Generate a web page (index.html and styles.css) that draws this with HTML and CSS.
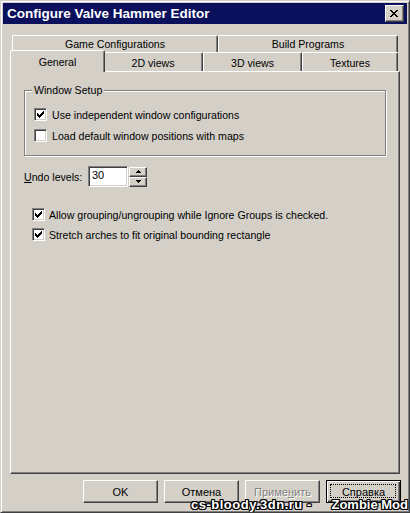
FILE: index.html
```html
<!DOCTYPE html>
<html>
<head>
<meta charset="utf-8">
<link rel="stylesheet" href="styles.css">
</head>
<body>
<div class="window">
  <div class="titlebar">
    <span class="title">Configure Valve Hammer Editor</span>
    <div class="close">
      <svg width="8" height="7" viewBox="0 0 8 7"><path d="M0 0h2v1h1v1h2V1h1V0h2v1H7v1H6v1H5v1h1v1h1v1h1v1H6V6H5V5H3v1H2v1H0V6h1V5h1V4h1V3H2V2H1V1H0z" fill="#000"/></svg>
    </div>
  </div>
  <div class="client">
    <div class="tabs">
      <div class="tabrow back">
        <div class="tab w-game">Game Configurations</div>
        <div class="tab w-build">Build Programs</div>
      </div>
      <div class="tabrow front">
        <div class="tab sel w-general">General</div>
        <div class="tab w-2d">2D views</div>
        <div class="tab w-3d">3D views</div>
        <div class="tab w-tex">Textures</div>
      </div>
    </div>
    <div class="panel">
      <div class="group">
        <div class="group-label">Window Setup</div>
        <label class="check">
          <span class="box"><svg width="7" height="7" viewBox="0 0 7 7"><path d="M6 0h1v3H6v1H5v1H4v1H3v1H2V6H1V5H0V2h1v1h1v1h1V3h1V2h1V1h1z" fill="#000"/></svg></span>
          <span>Use independent window configurations</span>
        </label>
        <label class="check">
          <span class="box"></span>
          <span>Load default window positions with maps</span>
        </label>
      </div>
      <div class="undo">
        <span class="undo-label"><u>U</u>ndo levels:</span>
        <div class="edit">30</div>
        <div class="spin">
          <div class="spin-btn"><svg width="5" height="3" viewBox="0 0 5 3"><path d="M2 0h1v1h1v1h1v1H0V2h1V1h1z" fill="#000"/></svg></div>
          <div class="spin-btn"><svg width="5" height="3" viewBox="0 0 5 3"><path d="M0 0h5v1H4v1H3v1H2V2H1V1H0z" fill="#000"/></svg></div>
        </div>
      </div>
      <div class="options">
        <label class="check small-gap">
          <span class="box"><svg width="7" height="7" viewBox="0 0 7 7"><path d="M6 0h1v3H6v1H5v1H4v1H3v1H2V6H1V5H0V2h1v1h1v1h1V3h1V2h1V1h1z" fill="#000"/></svg></span>
          <span>Allow grouping/ungrouping while Ignore Groups is checked.</span>
        </label>
        <label class="check small-gap">
          <span class="box"><svg width="7" height="7" viewBox="0 0 7 7"><path d="M6 0h1v3H6v1H5v1H4v1H3v1H2V6H1V5H0V2h1v1h1v1h1V3h1V2h1V1h1z" fill="#000"/></svg></span>
          <span>Stretch arches to fit original bounding rectangle</span>
        </label>
      </div>
    </div>
    <div class="buttons">
      <div class="btn">OK</div>
      <div class="btn">Отмена</div>
      <div class="btn disabled">Приме<u>н</u>ить</div>
      <div class="btn default">Справка</div>
    </div>
  </div>
  <div class="watermark"><span class="wm-site">cs-bloody.3dn.ru -</span><span>Zombie Mod</span></div>
</div>
</body>
</html>
```
FILE: styles.css
```css
html, body {
  margin: 0;
  padding: 0;
  background: #d4d0c8;
}
body {
  font-family: "Liberation Sans", Arial, sans-serif;
  font-size: 10.6px;
  color: #000;
}
.window {
  position: relative;
  width: 410px;
  height: 513px;
  box-sizing: border-box;
  background: #d4d0c8;
  border: 1px solid;
  border-color: #d4d0c8 #404040 #404040 #d4d0c8;
  box-shadow: inset 1px 1px 0 #fff, inset -1px -1px 0 #808080;
  padding: 2px;
  display: flex;
  flex-direction: column;
  overflow: hidden;
}
.titlebar {
  height: 21px;
  flex: none;
  background: #0a105c;
  display: flex;
  align-items: center;
  justify-content: space-between;
  padding: 0 3px 0 4px;
}
.title {
  color: #fff;
  font-weight: bold;
  font-size: 13.5px;
}
.close {
  width: 19px;
  height: 17px;
  box-sizing: border-box;
  background: #d4d0c8;
  border: 1px solid;
  border-color: #fff #404040 #404040 #fff;
  box-shadow: inset -1px -1px 0 #808080;
  display: flex;
  align-items: center;
  justify-content: center;
  padding: 0 1px 1px 0;
}
.close svg { display: block; }
.client {
  flex: 1;
  padding: 11px 7px 0 7px;
  display: flex;
  flex-direction: column;
}
.tabs {
  display: flex;
  flex-direction: column;
}
.tabrow {
  display: flex;
  margin-left: 2px;
  width: 386px;
}
.tabrow.back { height: 17px; }
.tabrow.front { height: 19px; }
.tab {
  box-sizing: border-box;
  height: 100%;
  background: #d4d0c8;
  border-top: 1px solid #fff;
  border-left: 1px solid #fff;
  border-right: 1px solid #404040;
  box-shadow: inset -1px 0 0 #808080;
  border-radius: 2px 2px 0 0;
  display: flex;
  align-items: center;
  justify-content: center;
  flex: none;
}
.tabrow.front .tab { padding-top: 2px; }
.tab.sel {
  position: relative;
  z-index: 1;
  margin: -2px -2px 0 -2px;
  height: 22px;
  padding-top: 0;
  padding-bottom: 1px;
}
.w-game { width: 206px; }
.w-build { width: 180px; }
.w-general { width: 95px; }
.w-2d { width: 100px; }
.w-3d { width: 99px; }
.w-tex { width: 96px; }
.panel {
  height: 403px;
  box-sizing: border-box;
  border: 1px solid;
  border-color: #fff #404040 #404040 #fff;
  box-shadow: inset -1px -1px 0 #808080;
  padding: 18px 0 0 13px;
  display: flex;
  flex-direction: column;
}
.group {
  position: relative;
  width: 362px;
  height: 66px;
  box-sizing: border-box;
  border: 1px solid #808080;
  box-shadow: inset 1px 1px 0 #fff, 1px 1px 0 #fff;
  padding: 17px 0 0 9px;
  display: flex;
  flex-direction: column;
  gap: 8px;
}
.group-label {
  position: absolute;
  left: 7px;
  top: -7px;
  padding: 0 2px;
  background: #d4d0c8;
  line-height: 13px;
}
.check {
  display: flex;
  align-items: center;
  gap: 5px;
  height: 13px;
  white-space: nowrap;
}
.check.small-gap { gap: 4px; }
.box {
  width: 13px;
  height: 13px;
  box-sizing: border-box;
  flex: none;
  background: #fff;
  border: 1px solid;
  border-color: #808080 #fff #fff #808080;
  box-shadow: inset 1px 1px 0 #404040, inset -1px -1px 0 #d4d0c8;
  display: flex;
  align-items: center;
  justify-content: center;
}
.box svg { display: block; }
.undo {
  display: flex;
  align-items: center;
  margin-top: 10px;
  height: 21px;
}
.undo-label { width: 64px; flex: none; }
.edit {
  width: 40px;
  height: 21px;
  box-sizing: border-box;
  background: #fff;
  border: 1px solid;
  border-color: #808080 #fff #fff #808080;
  box-shadow: inset 1px 1px 0 #404040, inset -1px -1px 0 #d4d0c8;
  padding: 2px 0 0 3px;
  font-size: 11px;
}
.spin {
  margin-left: 1px;
  width: 18px;
  height: 20px;
  display: flex;
  flex-direction: column;
}
.spin-btn {
  flex: 1;
  box-sizing: border-box;
  border: 1px solid;
  border-color: #fff #404040 #404040 #fff;
  box-shadow: inset -1px -1px 0 #808080;
  display: flex;
  align-items: center;
  justify-content: center;
}
.spin-btn svg { display: block; }
.options {
  margin-top: 21px;
  margin-left: 8px;
  display: flex;
  flex-direction: column;
  gap: 7px;
}
.buttons {
  display: flex;
  justify-content: flex-end;
  gap: 6px;
  margin-top: 6px;
  margin-right: -1px;
}
.btn {
  position: relative;
  width: 75px;
  height: 23px;
  box-sizing: border-box;
  border: 1px solid;
  border-color: #fff #404040 #404040 #fff;
  box-shadow: inset -1px -1px 0 #808080;
  display: flex;
  align-items: center;
  justify-content: center;
  font-size: 11px;
}
.btn.disabled {
  color: #808080;
  text-shadow: 1px 1px 0 #fff;
}
.btn.default {
  border-color: #000;
  box-shadow: inset 1px 1px 0 #fff, inset -1px -1px 0 #404040, inset -2px -2px 0 #808080;
}
.btn.default::after {
  content: "";
  position: absolute;
  left: 3px;
  top: 3px;
  right: 4px;
  bottom: 4px;
  border: 1px dotted #000;
}
.watermark {
  position: absolute;
  left: 190px;
  top: 497px;
  width: 217px;
  display: flex;
  justify-content: space-between;
  white-space: pre;
  font-family: "Liberation Sans", Arial, sans-serif;
  font-weight: bold;
  font-size: 13px;
  line-height: 14px;
  color: #fff;
  text-shadow: 1px 0 0 #000, -1px 0 0 #000, 0 1px 0 #000, 0 -1px 0 #000,
    1px 1px 0 #000, -1px -1px 0 #000, 1px -1px 0 #000, -1px 1px 0 #000;
}
.wm-site { letter-spacing: 0.5px; }
```
